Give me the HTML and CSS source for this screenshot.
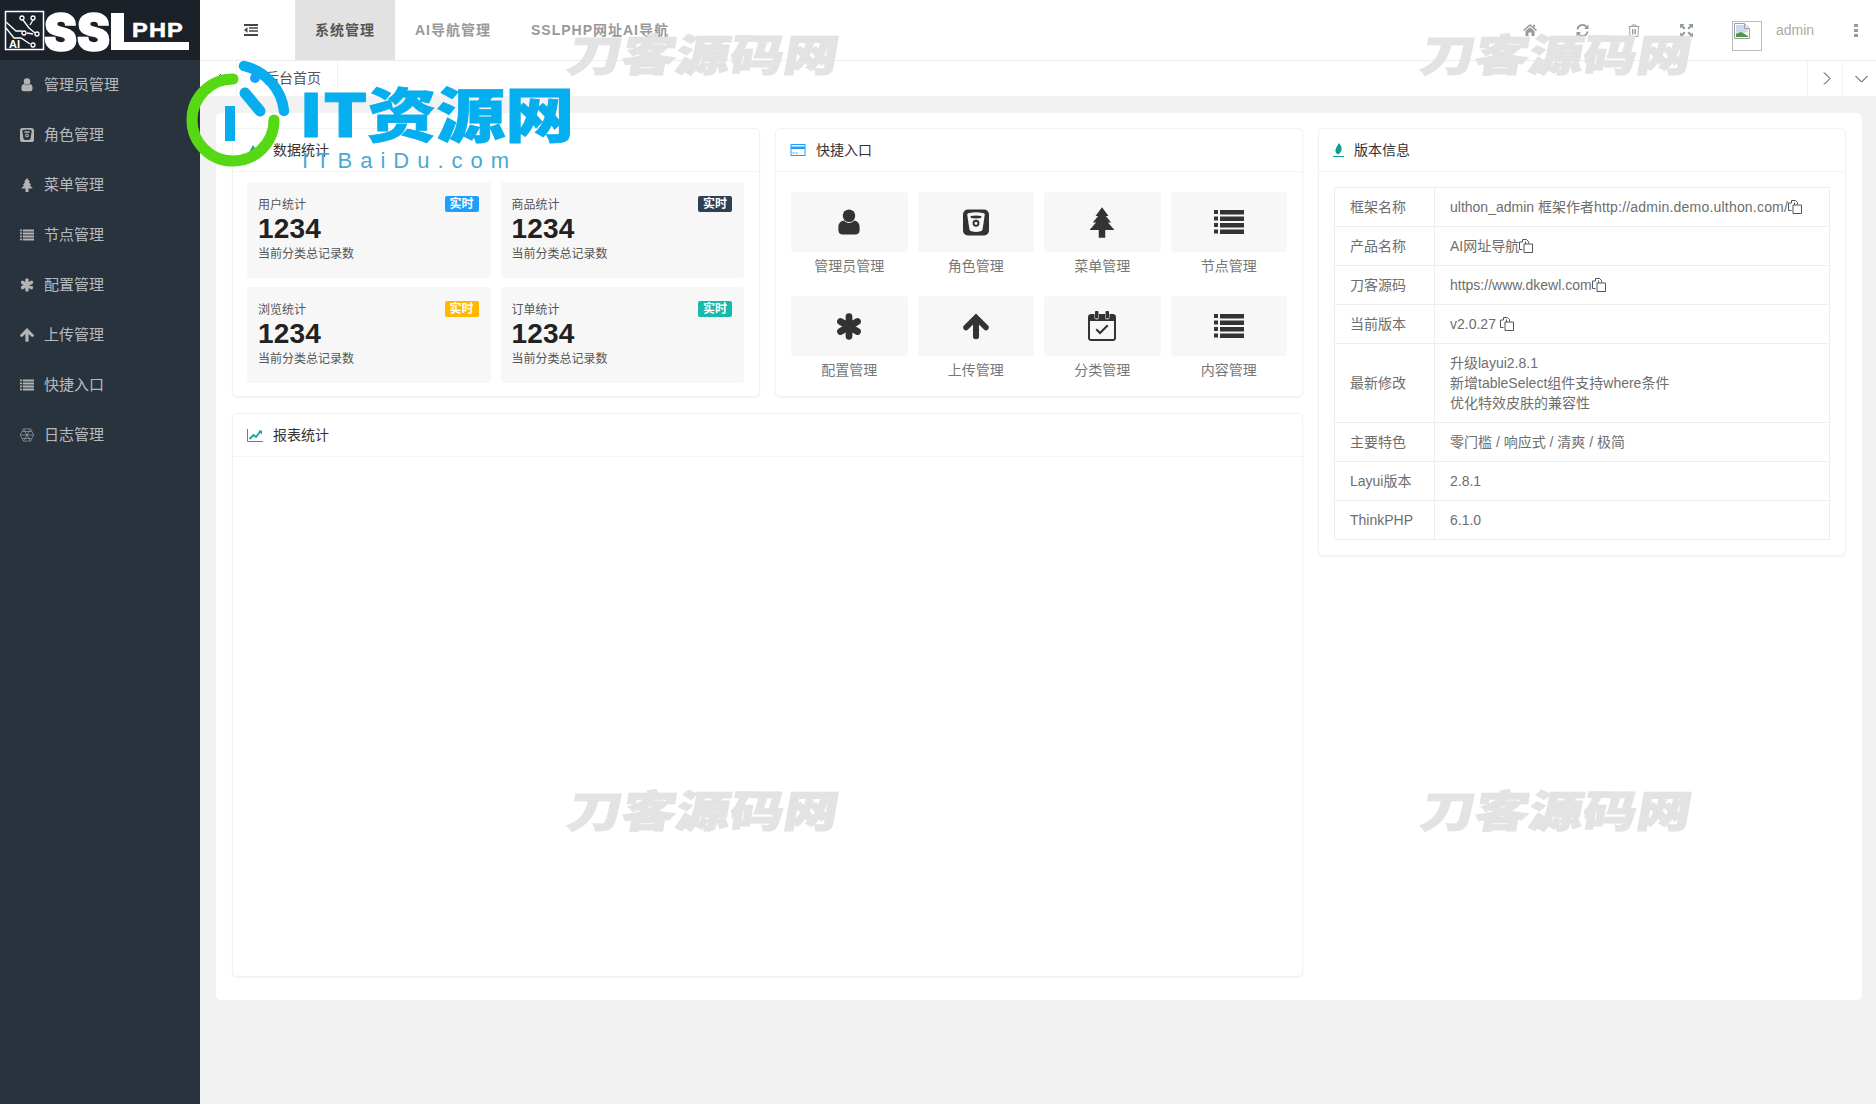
FILE: index.html
```html
<!DOCTYPE html>
<html lang="zh-CN">
<head>
<meta charset="utf-8">
<title>后台首页</title>
<link rel="stylesheet" href="styles.css">
</head>
<body>
<svg class="sprite" width="0" height="0" aria-hidden="true">
  <defs>
    <symbol id="i-user" viewBox="0 0 24 28"><circle cx="12" cy="7" r="6.5"/><path d="M1 22v-3.500c0-3.500 2.500-6 5.500-6.500 1.500 1.600 3.500 2.400 5.500 2.400s4-.8 5.500-2.400c3 .5 5.500 3 5.500 6.500V22c0 3-2 4.500-4.500 4.500h-13C3 26.500 1 25 1 22z"/></symbol>
    <symbol id="i-bucket" viewBox="0 0 24 24"><path fill-rule="evenodd" d="M4.500 0h15A4.500 4.500 0 0 1 24 4.500v15a4.500 4.500 0 0 1-4.500 4.500h-15A4.500 4.500 0 0 1 0 19.500v-15A4.500 4.500 0 0 1 4.500 0zM5 3.500c-1 .3-1.200 1-1 2l1.900 12.500c.2 1.200.8 1.800 1.900 2.100 2.900.8 5.500.8 8.400 0 1.100-.3 1.700-.9 1.900-2.100L20 5.500c.2-1-.000-1.700-1-2-4.500-1.200-9.500-1.200-14 0zM7 6c3-.7 7-.7 10 0l-.3 1.800c-3 .6-6.400.6-9.400 0zM12 9.500a3.200 3.200 0 1 1 0 6.400 3.200 3.200 0 0 1 0-6.400zm0 1.800a1.400 1.400 0 1 0 0 2.800 1.400 1.400 0 0 0 0-2.800z"/></symbol>
    <symbol id="i-tree" viewBox="0 0 24 28"><path d="M12 0l6 8h-2.500l5 6h-3l6 7H15v7H9v-7H.5l6-7h-3l5-6H6z"/></symbol>
    <symbol id="i-list" viewBox="0 0 30 24"><path d="M0 0h4v4H0zM6 0h24v4.500H6zM0 6.500h4v4H0zM6 6.500h24V11H6zM0 13h4v4H0zM6 13h24v4.500H6zM0 19.500h4v4H0zM6 19.500h24V24H6z"/></symbol>
    <symbol id="i-star" viewBox="0 0 24 26"><g stroke="currentColor" stroke-width="6.500" stroke-linecap="round"><path d="M12 3.500v19M3.800 8.200l16.400 9.600M3.800 17.800l16.400-9.600"/></g></symbol>
    <symbol id="i-up" viewBox="0 0 26 26"><path d="M13 0l12 12c1.200 1.200 1.200 2.800 0 4-1.200 1.200-2.800 1.200-4 0l-5-5v12.500c0 3-6 3-6 0V11l-5 5c-1.200 1.200-2.800 1.200-4 0-1.200-1.200-1.200-2.800 0-4z"/></symbol>
    <symbol id="i-cal" viewBox="0 0 28 30"><path fill-rule="evenodd" d="M3 3h3.500v3.500c0 2.500 4.500 2.500 4.500 0V3h6v3.500c0 2.500 4.500 2.500 4.500 0V3H25c1.500 0 3 1.200 3 3v21c0 1.800-1.500 3-3 3H3c-1.500 0-3-1.200-3-3V6c0-1.800 1.500-3 3-3zM2 10v17c0 .6.400 1 1 1h22c.6 0 1-.4 1-1V10z"/><path d="M8 0h1.500c.6 0 1 .4 1 1v5.500c0 .6-.4 1-1 1H8c-.6 0-1-.4-1-1V1c0-.6.400-1 1-1zM18.500 0H20c.6 0 1 .4 1 1v5.500c0 .6-.4 1-1 1h-1.500c-.6 0-1-.4-1-1V1c0-.6.400-1 1-1zM7.500 19l1.500-1.500 3 3 7-7 1.500 1.500-8.500 8.500z"/></symbol>
    <symbol id="i-copy" viewBox="0 0 14 14"><path fill="none" stroke="currentColor" d="M3.500 10.500H.5V3h3M3.500 3V.5h4l2 2v2M5 5h8.500v8.500H5zM6.500 2.500V5"/></symbol>
    <symbol id="i-globe" viewBox="0 0 24 24"><g fill="none" stroke="currentColor"><path d="M6 1.500h12l5.500 10.500L18 22.500H6L.5 12z"/><path d="M6 1.500L18 22.500M18 1.500L6 22.500M.5 12h23M4 6h16M4 18h16"/></g></symbol>
  </defs>
</svg>
<div class="layout">
  <aside class="side">
    <div class="brand">
      <svg class="brand-art" viewBox="0 0 200 60" width="200" height="60">
        <rect x="5.500" y="11.500" width="38" height="38" fill="none" stroke="#fff" stroke-width="1.500"/>
        <g fill="none" stroke="#fff" stroke-width="1.300">
          <circle cx="22" cy="18" r="2"/><circle cx="33" cy="18" r="2"/><circle cx="24" cy="33" r="2"/><circle cx="37" cy="34" r="2"/><circle cx="33" cy="45" r="2"/>
          <path d="M6 22l10 9h6M6 28l8 10h7l9 6M23 20l6 8 6 5M33 20l-3 5M27 33l6 1"/>
        </g>
        <text class="logo-ai" x="9" y="48">AI</text>
        <text class="logo-ss" x="44" y="50" textLength="66" lengthAdjust="spacingAndGlyphs">SS</text>
        <rect x="111" y="13" width="13" height="37" fill="#fff"/>
        <rect x="111" y="42" width="78" height="8" fill="#fff"/>
        <text class="logo-php" x="132" y="37" textLength="52" lengthAdjust="spacingAndGlyphs">PHP</text>
      </svg>
    </div>
    <nav class="menu">
      <a class="menu-item"><svg class="mi"><use href="#i-user"/></svg>管理员管理</a>
      <a class="menu-item"><svg class="mi"><use href="#i-bucket"/></svg>角色管理</a>
      <a class="menu-item"><svg class="mi"><use href="#i-tree"/></svg>菜单管理</a>
      <a class="menu-item"><svg class="mi"><use href="#i-list"/></svg>节点管理</a>
      <a class="menu-item"><svg class="mi"><use href="#i-star"/></svg>配置管理</a>
      <a class="menu-item"><svg class="mi"><use href="#i-up"/></svg>上传管理</a>
      <a class="menu-item"><svg class="mi"><use href="#i-list"/></svg>快捷入口</a>
      <a class="menu-item"><svg class="mi"><use href="#i-globe"/></svg>日志管理</a>
    </nav>
  </aside>
  <div class="main">
    <header class="top">
      <div class="fold">
        <svg width="14" height="12" viewBox="0 0 14 12"><path d="M0 0h14v2H0zM5 3.300h9v1.500H5zM5 6.300h9v1.500H5zM0 10h14v2H0zM3.500 3.200v5.600L0 6z" fill="#444"/></svg>
      </div>
      <a class="tab tab-on">系统管理</a>
      <a class="tab">AI导航管理</a>
      <a class="tab">SSLPHP网址AI导航</a>
      <div class="tools">
        <span class="tool"><svg width="14" height="12" viewBox="0 0 14 12"><path d="M7 0l7 6-1 1-6-5-6 5-1-1zM2.500 7L7 3.200 11.500 7v5H8.500V8.500h-3V12h-3zM10 .8h2v3l-2-1.700z" fill="#999"/></svg></span>
        <span class="tool"><svg width="13" height="13" viewBox="0 0 13 13"><path d="M1.500 5.500A5 5 0 0 1 10.500 3M11.500 7.500A5 5 0 0 1 2.500 10" fill="none" stroke="#999" stroke-width="1.800"/><path d="M12.500 .5v4.500H8zM.5 12.500V8H5z" fill="#999"/></svg></span>
        <span class="tool"><svg width="12" height="13" viewBox="0 0 12 13"><path d="M.5 2.500h11M4 2.500V1h4v1.500M1.500 2.500l.5 10h8l.5-10M4.500 5v5.500M6 5v5.500M7.500 5v5.500" fill="none" stroke="#a99aa6"/></svg></span>
        <span class="tool"><svg width="13" height="13" viewBox="0 0 13 13"><path d="M0 0h4.500L3 1.500l2.500 2.500-1.500 1.500L1.500 3 0 4.500zM13 0v4.500L11.500 3 9 5.500 7.500 4 10 1.500 8.500 0zM0 13V8.500L1.500 10 4 7.500 5.500 9 3 11.500 4.500 13zM13 13H8.500L10 11.500 7.500 9 9 7.500l2.500 2.500L13 8.500z" fill="#8e9a96"/></svg></span>
        <span class="avatar">
          <svg width="16" height="16" viewBox="0 0 16 16"><path d="M.5.500h10l5 5v10H.5z" fill="#fff" stroke="#9aa0a6"/><path d="M2 2h8v4h4v3L2 12z" fill="#c7dcf3"/><path d="M2 14V11l5-2 7 4v1z" fill="#4f9a3c"/><path d="M10.500.500v5h5" fill="#e8e8e8" stroke="#9aa0a6"/></svg>
        </span>
        <span class="who">admin</span>
        <span class="dots"><i></i><i></i><i></i></span>
      </div>
    </header>
    <div class="strip">
      <span class="strip-btn strip-left"><svg width="7" height="12" viewBox="0 0 7 12"><path d="M6 1L1 6l5 5" fill="none" stroke="#555"/></svg></span>
      <span class="home-tab"><i class="home-dot"></i>后台首页</span>
      <span class="strip-btn strip-next"><svg width="8" height="13" viewBox="0 0 8 13"><path d="M1 .5l6 6-6 6" fill="none" stroke="#1f2d3d"/></svg></span>
      <span class="strip-btn strip-down"><svg width="13" height="8" viewBox="0 0 13 8"><path d="M.5 1l6 6 6-6" fill="none" stroke="#1f2d3d"/></svg></span>
    </div>
    <main class="panel">
      <section class="card">
        <h3 class="card-head"><svg class="head-ico" width="16" height="14" viewBox="0 0 16 14"><path d="M0 13L6 2l4 6 3-4 3 9z" fill="#16a598"/></svg>数据统计</h3>
        <div class="stats">
          <div class="stat"><div class="stat-top"><span>用户统计</span><b class="tag tag-blue">实时</b></div><div class="stat-num">1234</div><div class="stat-sub">当前分类总记录数</div></div>
          <div class="stat"><div class="stat-top"><span>商品统计</span><b class="tag tag-navy">实时</b></div><div class="stat-num">1234</div><div class="stat-sub">当前分类总记录数</div></div>
          <div class="stat"><div class="stat-top"><span>浏览统计</span><b class="tag tag-gold">实时</b></div><div class="stat-num">1234</div><div class="stat-sub">当前分类总记录数</div></div>
          <div class="stat"><div class="stat-top"><span>订单统计</span><b class="tag tag-teal">实时</b></div><div class="stat-num">1234</div><div class="stat-sub">当前分类总记录数</div></div>
        </div>
      </section>
      <section class="card">
        <h3 class="card-head"><svg class="head-ico" width="15" height="12" viewBox="0 0 15 12"><path fill-rule="evenodd" d="M0 0h15v12H0zM1 1v1.500h13V1zM1 5v6h13V5zM2 8.500h2v1H2zM5 8.500h2v1H5z" fill="#1e9fff"/></svg>快捷入口</h3>
        <div class="tiles">
          <a class="tile"><span class="tile-box"><svg class="ti"><use href="#i-user"/></svg></span>管理员管理</a>
          <a class="tile"><span class="tile-box"><svg class="ti"><use href="#i-bucket"/></svg></span>角色管理</a>
          <a class="tile"><span class="tile-box"><svg class="ti ti-tree"><use href="#i-tree"/></svg></span>菜单管理</a>
          <a class="tile"><span class="tile-box"><svg class="ti ti-wide"><use href="#i-list"/></svg></span>节点管理</a>
          <a class="tile"><span class="tile-box"><svg class="ti"><use href="#i-star"/></svg></span>配置管理</a>
          <a class="tile"><span class="tile-box"><svg class="ti"><use href="#i-up"/></svg></span>上传管理</a>
          <a class="tile"><span class="tile-box"><svg class="ti ti-cal"><use href="#i-cal"/></svg></span>分类管理</a>
          <a class="tile"><span class="tile-box"><svg class="ti ti-wide"><use href="#i-list"/></svg></span>内容管理</a>
        </div>
      </section>
      <section class="card card-info">
        <h3 class="card-head"><svg class="head-ico ico-leaf" width="11" height="14" viewBox="0 0 11 14"><path d="M6 0c2.500 3 3 5 2.500 7S6.500 10.500 5 11.500C3 10.500 2 8.500 2.500 6.500S4.500 2.500 6 0z" fill="#0f9d8c"/><path d="M0 13h11v1H0z" fill="#0f9d8c"/></svg>版本信息</h3>
        <div class="info-body">
          <table class="info">
            <tr><td>框架名称</td><td>ulthon_admin 框架作者<span class="url-wide">http://admin.demo.ulthon.com/</span><svg class="cp"><use href="#i-copy"/></svg></td></tr>
            <tr><td>产品名称</td><td>AI网址导航<svg class="cp"><use href="#i-copy"/></svg></td></tr>
            <tr><td>刀客源码</td><td>https://www.dkewl.com<svg class="cp"><use href="#i-copy"/></svg></td></tr>
            <tr><td>当前版本</td><td>v2.0.27 <svg class="cp"><use href="#i-copy"/></svg></td></tr>
            <tr><td>最新修改</td><td>升级layui2.8.1<br>新增tableSelect组件支持where条件<br>优化特效皮肤的兼容性</td></tr>
            <tr><td>主要特色</td><td>零门槛 / 响应式 / 清爽 / 极简</td></tr>
            <tr><td>Layui版本</td><td>2.8.1</td></tr>
            <tr><td>ThinkPHP</td><td>6.1.0</td></tr>
          </table>
        </div>
      </section>
      <section class="card card-report">
        <h3 class="card-head"><svg class="head-ico" width="16" height="13" viewBox="0 0 16 13"><path d="M.5 0v12.500H16" fill="none" stroke="#16a598"/><path d="M2.500 10l4-4 2.500 2 4-5" fill="none" stroke="#16a598" stroke-width="1.800"/><path d="M11 1.500h4v4z" fill="#16a598"/></svg>报表统计</h3>
      </section>
    </main>
  </div>
</div>
<div class="mark mark-a">刀客源码网</div>
<div class="mark mark-b">刀客源码网</div>
<div class="mark mark-c">刀客源码网</div>
<div class="mark mark-d">刀客源码网</div>
<div class="stamp">
  <svg class="stamp-art" width="120" height="125" viewBox="0 0 120 125">
    <path d="M49 21A41 41 0 1 0 90 62" fill="none" stroke="#56d914" stroke-width="11" stroke-linecap="round"/>
    <path d="M60 8A52 52 0 0 1 100 53" fill="none" stroke="#08adee" stroke-width="10.500" stroke-linecap="round"/>
    <path d="M61 35L76 53" fill="none" stroke="#08adee" stroke-width="11" stroke-linecap="round"/>
    <rect x="41" y="48" width="10" height="35" fill="#08adee"/>
  </svg>
  <div class="stamp-main">IT资源网</div>
  <div class="stamp-sub">ITBaiDu.com</div>
</div>
</body>
</html>
```
FILE: styles.css
```css
* { box-sizing: border-box; }
html, body { margin: 0; height: 100%; overflow: hidden; }
body {
  position: relative;
  background: #f2f2f2;
  font: 14px/20px "Liberation Sans", "Noto Sans CJK SC", sans-serif;
  color: #666;
}
.sprite { position: absolute; }
.layout { display: flex; height: 1104px; }

.side { width: 200px; flex: none; background: #28333e; }
.brand { height: 60px; background: #1b2129; }
.brand-art { display: block; overflow: visible; }
.logo-ai { font: 700 11px "Liberation Sans", sans-serif; fill: #fff; }
.logo-ss { font: 900 50px Inter, "Liberation Sans", sans-serif; fill: #fff; stroke: #fff; stroke-width: 1.5px; }
.logo-php { font: 700 20px "Liberation Sans", sans-serif; fill: #fff; stroke: #fff; stroke-width: .5px; letter-spacing: 1px; }
.menu { display: flex; flex-direction: column; }
.menu-item {
  display: flex; align-items: center; height: 50px; padding-left: 20px;
  font-size: 15px; color: rgba(255, 255, 255, .68);
}
.mi { width: 14px; height: 14px; margin-right: 10px; fill: #b4b4b4; color: #b4b4b4; flex: none; }

.main { flex: 1; min-width: 0; display: flex; flex-direction: column; }
.top { height: 61px; display: flex; background: #fff; border-bottom: 1px solid #eee; }
.fold { width: 95px; display: flex; align-items: center; padding-left: 44px; }
.tab {
  height: 60px; padding: 0 20px; line-height: 60px; letter-spacing: 1px;
  color: #999; font-weight: 700; white-space: nowrap;
}
.tab-on { background: #e2e2e2; color: #555; }
.tools { margin-left: auto; display: flex; align-items: center; height: 60px; }
.tool { width: 52px; display: flex; justify-content: center; }
.avatar {
  width: 30px; height: 30px; margin: 0 14px 0 20px; border: 1px solid #bbb; padding: 1px;
  align-self: flex-end; margin-bottom: 9px; background: #fff;
}
.avatar svg { display: block; }
.who { color: #aaa; width: 60px; }
.dots { width: 40px; display: flex; flex-direction: column; align-items: center; gap: 2px; }
.dots i { width: 4px; height: 3px; background: #999; }

.strip { height: 35px; display: flex; background: #fff; align-items: stretch; }
.strip-btn { width: 35px; display: flex; align-items: center; justify-content: center; }
.strip-left { width: 37px; border-right: 1px solid #f2f2f2; }
.strip-next { margin-left: auto; border-left: 1px solid #f2f2f2; padding-left: 3px; }
.strip-down { border-left: 1px solid #f2f2f2; width: 34px; padding-left: 3px; }
.home-tab {
  width: 101px; display: flex; align-items: center; padding: 0 0 2px 13px; gap: 5px;
  border-right: 1px solid #f2f2f2; color: #555;
}
.home-dot { width: 10px; height: 10px; border-radius: 50%; background: #1e9fff; }

.panel {
  margin: 17px 14px 0 16px; width: 1646px; height: 887px; padding: 15px 16px;
  background: #fff; border-radius: 5px;
  display: grid; grid-template-columns: repeat(3, 528px); grid-template-rows: 269px 564px;
  column-gap: 15px; row-gap: 16px; align-items: start;
}
.card {
  background: #fff; border: 1px solid #f2f2f2; border-radius: 5px;
  box-shadow: 0 1px 2px rgba(0, 0, 0, .06); height: 100%;
}
.card-info { grid-column: 3; grid-row: 1 / span 2; height: 428px; }
.card-report { grid-column: 1 / span 2; }
.card-head {
  margin: 0; height: 43px; display: flex; align-items: center; padding-left: 14px;
  border-bottom: 1px solid #f5f5f5; font-size: 14px; font-weight: 400; color: #333;
}
.head-ico { width: 16px; flex: none; margin-right: 10px; overflow: visible; }
.ico-leaf { width: 11px; margin-right: 10px; }

.stats { display: grid; grid-template-columns: 1fr 1fr; gap: 9px 10px; padding: 10px 15px 0 14px; }
.stat { height: 96px; padding: 14px 12px 0 11px; background: #f7f7f7; border-radius: 3px; font-size: 12px; line-height: 18px; color: #555; }
.stat-top { display: flex; justify-content: space-between; align-items: flex-start; }
.stat-num { font-size: 28px; line-height: 32px; font-weight: 700; color: #222; margin-top: -1px; letter-spacing: .2px; }
.stat-sub { line-height: 18px; }
.tag { width: 34px; height: 16px; border-radius: 2px; color: #fff; line-height: 16px; text-align: center; font-size: 12px; }
.tag-blue { background: #1e9fff; }
.tag-navy { background: #2f4056; }
.tag-gold { background: #ffb800; }
.tag-teal { background: #16baaa; }

.tiles { display: grid; grid-template-columns: repeat(4, 1fr); gap: 16px 10px; padding: 20px 15px 0; }
.tile { display: flex; flex-direction: column; align-items: center; line-height: 28px; color: #777; }
.tile-box { width: 100%; height: 60px; display: flex; align-items: center; justify-content: center; background: #f7f7f7; border-radius: 3px; }
.ti { width: 26px; height: 27px; fill: #333; color: #333; }
.ti-tree { width: 26px; height: 31px; }
.ti-wide { width: 30px; height: 24px; }
.ti-cal { width: 28px; height: 30px; }

.info-body { padding: 15px; }
.info { width: 496px; border-collapse: collapse; table-layout: fixed; }
.info td { border: 1px solid #eee; padding: 9px 15px; line-height: 20px; color: #6e6e6e; }
.info td:first-child { width: 100px; }
.url-wide { letter-spacing: .2px; }
.cp { width: 14px; height: 14px; vertical-align: -2px; color: #555; }

.mark {
  position: absolute; width: 280px; text-align: center; white-space: nowrap;
  font: 900 54px/60px "Noto Sans CJK SC", sans-serif; color: #e2e2e2;
  -webkit-text-stroke: 1.5px #e2e2e2;
  transform: skewX(-10deg) scaleY(.8); opacity: .95;
}
.mark-a { left: 564px; top: 23px; }
.mark-b { left: 1417px; top: 23px; }
.mark-c { left: 564px; top: 779px; }
.mark-d { left: 1417px; top: 779px; }

.stamp { position: absolute; left: 184px; top: 58px; width: 400px; height: 120px; }
.stamp-art { position: absolute; left: 0; top: 0; }
.stamp-main {
  position: absolute; left: 115px; top: 15px; white-space: nowrap;
  font: 900 69px/76px "Noto Sans CJK SC", sans-serif; color: #05aeef;
  -webkit-text-stroke: 1px #05aeef;
  transform: scaleY(.85); transform-origin: left center;
}
.stamp-sub {
  position: absolute; left: 118px; top: 90px; white-space: nowrap;
  font: 400 22px/26px "Liberation Sans", sans-serif; letter-spacing: 8px; color: #4aa9d3;
}
```
